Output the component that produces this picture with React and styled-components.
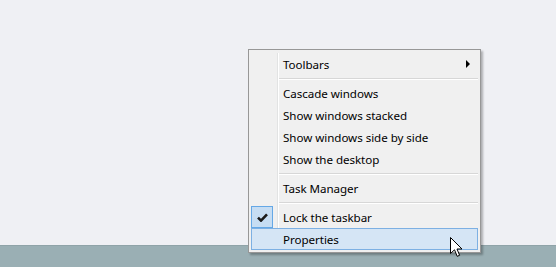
import React from 'react';
import styled, { createGlobalStyle } from 'styled-components';

const GlobalStyle = createGlobalStyle`
  html, body {
    margin: 0;
    padding: 0;
  }
  body {
    font-family: "Noto Sans", "Liberation Sans", sans-serif;
  }
`;

const Screen = styled.div`
  position: relative;
  width: 556px;
  height: 267px;
  display: flex;
  flex-direction: column;
  overflow: hidden;
  background: #eff0f4;
`;

const Desktop = styled.div`
  flex: 1;
`;

const Taskbar = styled.div`
  height: 21px;
  border-top: 1px solid #8fa3a8;
  background: #9aafb4;
`;

const Menu = styled.ul`
  position: absolute;
  left: 248px;
  top: 49px;
  width: 227px;
  margin: 0;
  padding: 3px 2px 2px;
  list-style: none;
  background: #f0f0f0;
  border: 1px solid #979797;
  box-shadow: 2px 2px 2px rgba(0, 0, 0, 0.28);
  display: flex;
  flex-direction: column;

  &::before {
    content: '';
    position: absolute;
    top: 3px;
    bottom: 2px;
    left: 28px;
    width: 1px;
    background: #e2e3e3;
    box-shadow: 1px 0 0 #ffffff;
  }
`;

const Item = styled.li`
  position: relative;
  height: 22px;
  box-sizing: border-box;
  display: flex;
  align-items: center;
  padding-left: 32px;
  font-size: 11.6px;
  letter-spacing: -0.05px;
  color: #000;
  border: 1px solid ${p => (p.$hot ? '#7db0e3' : 'transparent')};
  background: ${p => (p.$hot ? '#d5e5f5' : 'transparent')};
  z-index: 1;
`;

const Label = styled.span`
  flex: 1;
  margin-left: -1px;
`;

const Arrow = styled.span`
  width: 0;
  height: 0;
  margin-right: 7px;
  border-top: 4px solid transparent;
  border-bottom: 4px solid transparent;
  border-left: 4px solid #000;
`;

const CheckBox = styled.span`
  position: absolute;
  left: -1px;
  top: -1px;
  width: 22px;
  height: 22px;
  box-sizing: border-box;
  border: 1px solid #65a8e6;
  background: #c6ddf3;
  display: flex;
  align-items: center;
  justify-content: center;
`;

const Separator = styled.li`
  height: 7px;
  display: flex;
  align-items: center;
  margin-left: 28px;
  &::after {
    content: '';
    flex: 1;
    height: 1px;
    background: #d7d7d7;
    box-shadow: 0 1px 0 #ffffff;
  }
`;

const Cursor = styled.svg`
  position: absolute;
  left: 450px;
  top: 237px;
  z-index: 5;
`;

const Check = () => (
  <svg width="11" height="9" viewBox="0 0 11 9">
    <path d="M1 4.6 L4 7.6 L10 1.3" fill="none" stroke="#1a1a1a" strokeWidth="2.6" />
  </svg>
);

export default function App() {
  return (
    <>
      <GlobalStyle />
      <Screen>
        <Desktop />
        <Taskbar />
        <Menu>
          <Item>
            <Label>Toolbars</Label>
            <Arrow />
          </Item>
          <Separator />
          <Item><Label>Cascade windows</Label></Item>
          <Item><Label>Show windows stacked</Label></Item>
          <Item><Label>Show windows side by side</Label></Item>
          <Item><Label>Show the desktop</Label></Item>
          <Separator />
          <Item><Label>Task Manager</Label></Item>
          <Separator />
          <Item>
            <CheckBox><Check /></CheckBox>
            <Label>Lock the taskbar</Label>
          </Item>
          <Item $hot><Label>Properties</Label></Item>
        </Menu>
        <Cursor width="13" height="21" viewBox="0 0 13 21">
          <path
            d="M0.5 0.5 L0.5 16.5 L4.5 12.8 L7.2 19.3 L9.6 18.3 L7 12 L12 12 Z"
            fill="#ffffff"
            stroke="#000000"
            strokeWidth="1"
            strokeLinejoin="miter"
          />
        </Cursor>
      </Screen>
    </>
  );
}
